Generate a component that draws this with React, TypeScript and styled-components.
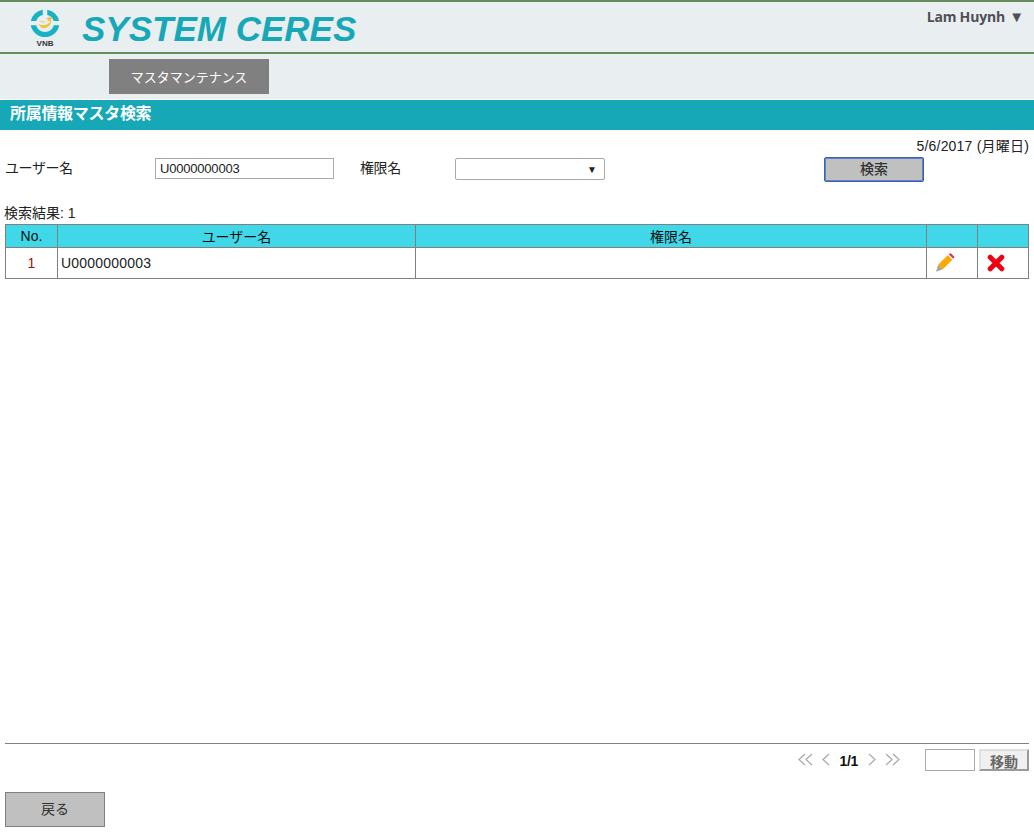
import React, { FC } from 'react';
import styled, { createGlobalStyle } from 'styled-components';

const GlobalStyle = createGlobalStyle`
    html, body {
        margin: 0;
        padding: 0;
        background: #fff;
        font-family: "Liberation Sans", "Noto Sans CJK JP", sans-serif;
        font-size: 14px;
        color: #222;
    }
    * {
        box-sizing: border-box;
    }
`;

const Page = styled.div`
    display: flex;
    flex-direction: column;
    height: 832px;
    overflow: hidden;
`;

const Header = styled.header`
    display: flex;
    justify-content: space-between;
    height: 54px;
    padding-left: 28px;
    background: #e9eef1;
    border-top: 2px solid #668c5c;
    border-bottom: 2px solid #668c5c;
`;

const Brand = styled.div`
    display: flex;
    align-items: center;
    gap: 20px;
`;

const LogoBox = styled.div`
    display: flex;
    flex-direction: column;
    align-items: center;
    width: 34px;
    margin-top: 2px;
`;

const LogoText = styled.span`
    font-size: 8px;
    font-weight: bold;
    line-height: 9px;
    color: #333;
`;

const BrandTitle = styled.div`
    margin-top: 4px;
    font-size: 35px;
    font-weight: bold;
    font-style: italic;
    color: #17a8b8;
`;

const UserMenu = styled.div`
    padding: 6px 10px 0 0;
    font-family: "Open Sans", "Liberation Sans", sans-serif;
    font-size: 14px;
    font-weight: bold;
    letter-spacing: -0.2px;
    line-height: 16px;
    color: #4f4f55;
`;

const MenuArrow = styled.span`
    margin-left: 1px;
    font-size: 15px;
`;

const NavBand = styled.nav`
    height: 45px;
    padding: 5px 0 0 109px;
    background: #e9eef1;
`;

const NavButton = styled.div`
    display: flex;
    align-items: center;
    justify-content: center;
    width: 160px;
    height: 35px;
    background: #808080;
    color: #fff;
    font-size: 13px;
`;

const TitleBar = styled.h1`
    height: 30px;
    margin: 1px 0 0;
    padding-left: 10px;
    background: #17a8b8;
    color: #fff;
    font-size: 16px;
    font-weight: bold;
    letter-spacing: -0.3px;
    line-height: 27px;
`;

const Main = styled.main`
    display: flex;
    flex: 1;
    flex-direction: column;
    padding: 0 5px;
`;

const DateLine = styled.div`
    height: 28px;
    padding-top: 7px;
    font-size: 14px;
    letter-spacing: 0.2px;
    line-height: 18px;
    text-align: right;
`;

const SearchRow = styled.div`
    display: grid;
    grid-template-columns: 150px 205px 95px 369px 100px;
    align-items: start;
    height: 46px;
`;

const FieldLabel = styled.label`
    letter-spacing: -0.4px;
    line-height: 21px;
`;

const TextInput = styled.input`
    width: 179px;
    height: 21px;
    padding: 0 4px;
    border: 1px solid #a9a9a9;
    background: #fff;
    color: #222;
    font: 13px "Liberation Sans", sans-serif;
    letter-spacing: -0.2px;
    outline: none;
`;

const SelectBox = styled.div`
    display: flex;
    align-items: center;
    justify-content: flex-end;
    width: 150px;
    height: 22px;
    padding-right: 7px;
    border: 1px solid #a9a9a9;
    border-radius: 2px;
    background: #fff;
    color: #222;
    font-size: 10px;
`;

const SearchButton = styled.button`
    width: 100px;
    height: 25px;
    margin-top: -1px;
    padding: 0 0 3px;
    border: 1px solid #3f5fa8;
    border-radius: 2px;
    box-shadow: inset 0 0 0 1px #5f82cc;
    background: #c0c0c0;
    color: #333;
    font: 500 14px "Liberation Sans", "Noto Sans CJK JP", sans-serif;
`;

const ResultCount = styled.div`
    height: 20px;
    margin-left: -1px;
    font-size: 14px;
    line-height: 18px;
`;

const ResultTable = styled.table`
    width: 1023px;
    border-collapse: collapse;
    table-layout: fixed;
    border: 1px solid #808080;
`;

const HeadCell = styled.th`
    height: 23px;
    padding: 0;
    border: 1px solid #808080;
    background: #40d7e8;
    color: #111;
    font-size: 14px;
    font-weight: normal;
`;

const Cell = styled.td<{ $align?: string; $color?: string }>`
    height: 31px;
    padding: 0 3px;
    border: 1px solid #808080;
    color: ${({ $color }) => $color || '#222'};
    font-size: 14px;
    letter-spacing: 0.2px;
    text-align: ${({ $align }) => $align || 'left'};
`;

const IconWrap = styled.span`
    display: inline-flex;
    margin-right: 14px;
    vertical-align: middle;
`;

const Spacer = styled.div`
    flex: 1;
`;

const PagerRow = styled.div`
    display: flex;
    align-items: center;
    justify-content: flex-end;
    height: 34px;
    padding-bottom: 2px;
    border-top: 1px solid #808080;
`;

const PagerNav = styled.div`
    display: flex;
    align-items: center;
    gap: 7px;
    margin-right: 24px;
`;

const PagerText = styled.span`
    margin: 2px 2px 0 1px;
    font-size: 14px;
    font-weight: bold;
    letter-spacing: -0.3px;
    color: #111;
`;

const PageInput = styled.input`
    width: 50px;
    height: 22px;
    margin-right: 4px;
    border: 1px solid #a9a9a9;
    background: #fff;
    outline: none;
`;

const MoveButton = styled.button`
    width: 50px;
    height: 22px;
    padding: 0 0 5px;
    border: 2px solid;
    border-color: #e0e0e0 #9a9a9a #9a9a9a #e0e0e0;
    background: #f0f0f0;
    color: #666;
    font: bold 14px "Liberation Sans", "Noto Sans CJK JP", sans-serif;
`;

const Footer = styled.div`
    height: 55px;
    padding-top: 15px;
`;

const BackButton = styled.button`
    display: block;
    width: 100px;
    height: 35px;
    padding: 0 0 3px;
    border: 1px solid #808080;
    background: #c0c0c0;
    color: #333;
    font: 14px "Liberation Sans", "Noto Sans CJK JP", sans-serif;
`;

const Logo: FC = () => (
    <svg width="30" height="30" viewBox="3 3 24 24">
        <path d="M3.6 12.5A11.6 11.6 0 0 1 13.2 3.6V7.8A7.4 7.4 0 0 0 8 12.5Z" fill="#17b3c4" />
        <path d="M16.8 3.6A11.6 11.6 0 0 1 26.4 12.5H22A7.4 7.4 0 0 0 16.8 7.8Z" fill="#17b3c4" />
        <path d="M3.6 16H7.9A7.4 7.4 0 0 0 22.1 16H26.4A11.6 11.6 0 0 1 3.6 16Z" fill="#17b3c4" />
        <path d="M10 15C13 17 18 16 20 12C20 16.5 16 19 12.5 18C11.5 17.5 10.5 16.5 10 15Z" fill="#f2c230" />
        <path d="M18.5 8.5L19.3 10L21 10.2L19.8 11.4L20 13L18.5 12.2L17 13L17.3 11.4L16 10.2L17.8 10Z" fill="#f2c230" />
        <path d="M10.5 12C12 13 14 13.3 15.5 13C14 14.3 12 14 10.5 12Z" fill="#f2c230" />
    </svg>
);

const Chevron: FC<{ double?: boolean; left?: boolean }> = ({ double, left }) => (
    <svg width={double ? 17 : 10} height="13" viewBox={`0 0 ${double ? 17 : 10} 13`} fill="none" stroke="#a8a8a8" strokeWidth="1.2">
        {left ? <path d="M8 1L2 6.5L8 12" /> : <path d="M2 1L8 6.5L2 12" />}
        {double && (left ? <path d="M15 1L9 6.5L15 12" /> : <path d="M9 1L15 6.5L9 12" />)}
    </svg>
);

const PencilIcon: FC = () => (
    <svg width="20" height="20" viewBox="0 0 20 20">
        <path d="M3.2 11.7L12.7 2.2L17.3 6.8L7.8 16.3Z" fill="#fba800" />
        <path d="M13.7 1.2L15 0.4C15.6 0.2 16 0.4 16.4 0.8L19 3.4C19.4 3.8 19.5 4.4 19 5L18.3 5.8Z" fill="#d8343c" />
        <path d="M3.2 11.7L7.8 16.3L1 18.8Z" fill="#a8a39a" />
    </svg>
);

const CrossIcon: FC = () => (
    <svg width="18" height="18" viewBox="0 0 18 18">
        <path d="M3.2 3.2L14.8 14.8M14.8 3.2L3.2 14.8" stroke="#f00010" strokeWidth="5" strokeLinecap="round" />
    </svg>
);

const App: FC = () => {
    return (
        <Page>
            <GlobalStyle />
            <Header>
                <Brand>
                    <LogoBox>
                        <Logo />
                        <LogoText>VNB</LogoText>
                    </LogoBox>
                    <BrandTitle>SYSTEM CERES</BrandTitle>
                </Brand>
                <UserMenu>
                    Lam Huynh <MenuArrow>▼</MenuArrow>
                </UserMenu>
            </Header>
            <NavBand>
                <NavButton>マスタマンテナンス</NavButton>
            </NavBand>
            <TitleBar>所属情報マスタ検索</TitleBar>
            <Main>
                <DateLine>5/6/2017 (月曜日)</DateLine>
                <SearchRow>
                    <FieldLabel>ユーザー名</FieldLabel>
                    <TextInput defaultValue="U0000000003" />
                    <FieldLabel>権限名</FieldLabel>
                    <SelectBox>▼</SelectBox>
                    <SearchButton>検索</SearchButton>
                </SearchRow>
                <ResultCount>検索結果: 1</ResultCount>
                <ResultTable>
                    <colgroup>
                        <col width="52" />
                        <col width="358" />
                        <col width="511" />
                        <col width="51" />
                        <col width="51" />
                    </colgroup>
                    <thead>
                        <tr>
                            <HeadCell>No.</HeadCell>
                            <HeadCell>ユーザー名</HeadCell>
                            <HeadCell>権限名</HeadCell>
                            <HeadCell />
                            <HeadCell />
                        </tr>
                    </thead>
                    <tbody>
                        <tr>
                            <Cell $align="center" $color="#a01010">1</Cell>
                            <Cell>U0000000003</Cell>
                            <Cell />
                            <Cell $align="center">
                                <IconWrap><PencilIcon /></IconWrap>
                            </Cell>
                            <Cell $align="center">
                                <IconWrap><CrossIcon /></IconWrap>
                            </Cell>
                        </tr>
                    </tbody>
                </ResultTable>
                <Spacer />
                <PagerRow>
                    <PagerNav>
                        <Chevron double left />
                        <Chevron left />
                        <PagerText>1/1</PagerText>
                        <Chevron />
                        <Chevron double />
                    </PagerNav>
                    <PageInput />
                    <MoveButton>移動</MoveButton>
                </PagerRow>
                <Footer>
                    <BackButton>戻る</BackButton>
                </Footer>
            </Main>
        </Page>
    );
};

export default App;
